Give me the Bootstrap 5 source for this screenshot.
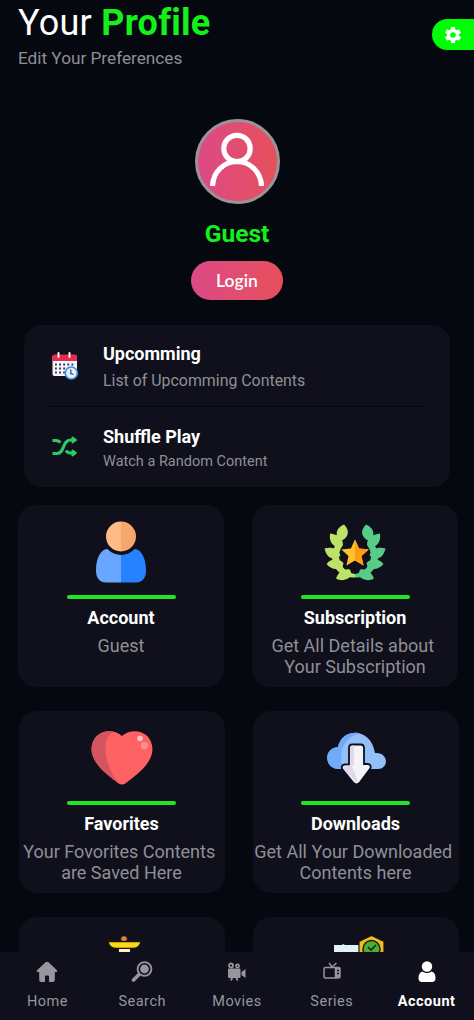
<!DOCTYPE html>
<html lang="en">
<head>
<meta charset="utf-8">
<meta name="viewport" content="width=device-width, initial-scale=1">
<title>Your Profile</title>
<link href="https://cdn.jsdelivr.net/npm/bootstrap@5.3.0/dist/css/bootstrap.min.css" rel="stylesheet">
<style>
body{background:#06080f;color:#fff;font-family:Roboto,"Liberation Sans",sans-serif}
main{min-height:0}
.page-head{height:85px;padding:3px 0 0 18px}
.page-title{font-size:36px;line-height:40px;font-weight:400;letter-spacing:.25px}
.green{color:#15f01c}
.dim{color:#8f8f96}
.page-sub{font-size:17.2px;line-height:22px;margin-top:4px}
.gear-btn{width:42px;height:31px;margin-top:16px;background:#00ff06;border-radius:16px 0 0 16px;padding-left:13px}
.avatar{width:85px;height:85px;margin-top:34px;border:3px solid #9a9499;background:linear-gradient(90deg,#dd4a85,#e6505c)}
.user-name{font-size:24.5px;line-height:30px;margin-top:15px}
.login-btn{width:92px;height:39px;margin-top:12px;background:linear-gradient(90deg,#dd4a85,#e6505c);color:#fff;font:600 17.5px/36px Lato,"Open Sans",sans-serif}
.panel{background:#0f101b;border-radius:18px}
.quick{margin:25px 24px 0;height:162px}
.quick-row{height:81px;padding:4px 24px 0}
.quick-icon{width:34px;margin-right:21px;padding-bottom:3px}
.rule{height:1px;margin:0 24px;background:#06070d}
.q-title{font-size:18px;line-height:22px}
.q-text{font-size:15.9px;line-height:22px;margin-top:5px}
.q-small{font-size:14.5px;margin-top:3px}
.tiles{display:grid;grid-template-columns:206px 206px;column-gap:28px;row-gap:24px;margin:18px 0 0 18px}
.tile{height:182px;padding-top:16px}
.tile svg{display:block}
.shift{margin-left:1px;margin-right:-1px;padding-right:1px}
.tile-bar{width:109px;height:4px;border-radius:2px;background:#21e524;margin-top:12px}
.t-title{font-size:18px;line-height:22px;margin-top:8px}
.t-text{font-size:18px;line-height:21px;margin-top:6px;white-space:nowrap}
.tabs{height:68px;background:#0f101b}
.tab-link{width:20%;padding-top:7px;color:#96969c;font-size:14.5px;letter-spacing:.5px;text-decoration:none}
.tab-link span{line-height:20px;margin-top:7px}
.tab-link.active{color:#fff;font-weight:700}
</style>
</head>
<body class="d-flex flex-column vh-100 overflow-hidden">
<header class="page-head d-flex justify-content-between flex-shrink-0">
  <div>
    <h1 class="page-title mb-0">Your <b class="green">Profile</b></h1>
    <p class="page-sub dim mb-0">Edit Your Preferences</p>
  </div>
  <a class="gear-btn d-flex align-items-center" href="#" aria-label="Settings">
    <svg width="16" height="16" viewBox="2 2 20 20" fill="#fff"><path fill-rule="evenodd" d="M19.4 13a7.500 7.500 0 0 0 0-2l2.100-1.650a.5.5 0 0 0 .12-.64l-2-3.460a.5.5 0 0 0-.61-.22l-2.490 1a7.300 7.300 0 0 0-1.690-.98l-.38-2.650A.5.5 0 0 0 14 2h-4a.5.5 0 0 0-.49.42l-.38 2.650c-.61.25-1.170.59-1.690.98l-2.490-1a.5.5 0 0 0-.61.22l-2 3.460a.5.5 0 0 0 .12.640L4.600 11a7.900 7.900 0 0 0 0 2l-2.110 1.650a.5.5 0 0 0-.12.640l2 3.460c.12.220.390.300.610.220l2.490-1c.52.400 1.080.730 1.690.980l.38 2.650c.3.240.240.420.490.420h4c.25 0 .460-.18.490-.42l.38-2.650c.61-.25 1.170-.59 1.690-.98l2.490 1c.23.090.490 0 .610-.22l2-3.460a.5.5 0 0 0-.12-.64zM12 15.500a3.500 3.500 0 1 1 0-7 3.500 3.500 0 0 1 0 7z"/></svg>
  </a>
</header>

<main class="flex-fill overflow-hidden">
  <section class="d-flex flex-column align-items-center">
    <div class="avatar rounded-circle d-flex justify-content-center align-items-center">
      <svg class="flex-shrink-0" width="80" height="80" viewBox="0 0 80 80" fill="none" stroke="#fff" stroke-width="5.200"><circle cx="40" cy="26.500" r="13.200"/><path d="M15.500 64C16 50 27 39.500 40 39.500S64 50 64.500 64"/></svg>
    </div>
    <h2 class="user-name green fw-bold mb-0">Guest</h2>
    <button class="login-btn btn rounded-pill border-0 p-0">Login</button>
  </section>

  <section class="panel quick">
    <div class="quick-row d-flex align-items-center">
      <div class="quick-icon d-flex justify-content-center">
        <svg width="28" height="28" viewBox="0 0 28 28"><rect x="1.500" y="3" width="24.500" height="21" rx="2" fill="#f4f4fa"/><path d="M1.500 9V4.500Q1.500 2.500 3.500 2.500H24Q26 2.500 26 4.500V9z" fill="#e52b4f"/><path d="M7.500 1v4M18.500 1v4" stroke="#fff" stroke-width="2" stroke-linecap="round"/><path d="M4 12.500h20M4 16.500h20M4 20.500h12" stroke="#343850" stroke-width="1.800" stroke-dasharray="1.900 2.200"/><circle cx="20.300" cy="21" r="6" fill="#dff1fc" stroke="#4692e4" stroke-width="1.700"/><path d="M19.800 17.500v4l2.700 1" fill="none" stroke="#3a4560" stroke-width="1.200"/></svg>
      </div>
      <div><div class="q-title fw-bold">Upcomming</div><div class="q-text dim">List of Upcomming Contents</div></div>
    </div>
    <div class="rule"></div>
    <div class="quick-row d-flex align-items-center">
      <div class="quick-icon d-flex justify-content-center">
        <svg width="28" height="24" viewBox="0 0 28 24" fill="none" stroke="#2bca66" stroke-width="3.100" stroke-linejoin="round"><path d="M1.500 4.500H5Q7.500 4.500 9.500 6.500M1.500 17.500H6C14 17.500 11 4 19.500 4H22M15 14.500Q16.500 17 19.500 17H22"/><path d="M21.500 1.500 25 4l-3.500 2.500zM21.500 14.500 25 17l-3.500 2.500z" fill="#2bca66" stroke-width="2"/></svg>
      </div>
      <div><div class="q-title fw-bold">Shuffle Play</div><div class="q-text q-small dim">Watch a Random Content</div></div>
    </div>
  </section>

  <section class="tiles text-center">
    <article class="panel tile d-flex flex-column align-items-center">
      <svg width="62" height="62" viewBox="0 0 62 62"><path d="M31 30.500c-5 0-6-1.500-8-2.500C12 25.500 6 35 6 50c0 7 4 11.500 10 11.500h15z" fill="#69a6ff"/><path d="M31 30.500c5 0 6-1.500 8-2.500 11-2.500 17 7 17 22 0 7-4 11.500-10 11.500H31z" fill="#2682ff"/><circle cx="31" cy="15.500" r="18.500" fill="#0f101b"/><path d="M31 .5a15 15 0 0 0 0 30z" fill="#ffbb85"/><path d="M31 .5a15 15 0 0 1 0 30z" fill="#f6a86c"/></svg>
      <div class="tile-bar"></div><div class="t-title fw-bold">Account</div><div class="t-text dim">Guest</div>
    </article>
    <article class="panel tile d-flex flex-column align-items-center">
      <svg width="62" height="62" viewBox="0 0 62 62"><defs><g id="branch"><path d="M31 56.500A21 21 0 0 1 14 21l5 3a18 18 0 0 0 12 29z"/><path d="M20 3.500c-7 3-9 8-6 15l4 1c7-4 8-10 2-16zM6 12.500c-1 8 2 12 9 15l4-4c0-6-5-10-13-11zM.5 27.500c2 8 6 11 12 10l4-3c-2-7-9-9-16-7zM2.500 43c5 6 11 6 16 3l1-4c-5-5-12-5-17 1zM12 57.500c6 3.500 12 1 16-3l-2-6c-7-1-11 2-14 9z"/></g></defs><use href="#branch" fill="#bce268"/><use href="#branch" fill="#57cc86" transform="matrix(-1 0 0 1 62 0)"/><path d="m31 18.500 4.100 9 9.600 1-7.200 6.500 2.100 9.500-8.600-4.900-8.600 4.900 2.100-9.500-7.200-6.500 9.600-1z" fill="#ffc12e"/><path d="m31 18.500 4.100 9 9.600 1-7.200 6.500 2.100 9.500-8.600-4.900z" fill="#ff9d12"/></svg>
      <div class="tile-bar"></div><div class="t-title fw-bold">Subscription</div><div class="t-text dim">Get All Details about&nbsp;<br>Your Subscription</div>
    </article>
    <article class="panel tile shift d-flex flex-column align-items-center">
      <svg width="62" height="62" viewBox="0 0 62 62"><path d="M31 9C22 0 1 3 .5 22 .5 37 18 49 27 56q4 3 8 0C44 49 61.500 37 61.500 22 61 3 40 0 31 9z" fill="#ff6265"/><path d="M23 4.700C11 2 1 9 .5 22 .5 37 18 49 28 56.500 20 46 14.500 34 14.500 22 14.500 13 17 7.500 23 4.700z" fill="#d45560"/><circle cx="49" cy="11.500" r="2.800" fill="#ffc5c4"/><circle cx="53.500" cy="18.500" r="3.700" fill="#ff8d8d"/></svg>
      <div class="tile-bar"></div><div class="t-title fw-bold">Favorites</div><div class="t-text dim">Your Fovorites Contents&nbsp;<br>are Saved Here</div>
    </article>
    <article class="panel tile shift d-flex flex-column align-items-center">
      <svg width="62" height="62" viewBox="0 0 62 62"><path d="M14 42C-1 42-2 21 13 20 17 0 46 0 50 26c14-1 14 16 3 16z" fill="#94c0fa"/><path d="M14 42C-1 42-2 21 13 20 16 8 25 5 34 6 18 12 13 25 18 42z" fill="#70aafa"/><path d="M24 21q0-3.500 3.500-3.500h8q3.500 0 3.500 3.500v16h3.500c3.500 0 4 3.500 2 5.500L34.500 56q-3 2.700-6 0L18 43c-2-2-1.500-5.500 2-5.500h4z" fill="#f5f2fa" stroke="#07101f" stroke-width="1.800"/><path d="M25 21q0-2.500 2.500-2.500H29v19q0 1-2 1.500l6 16-3-1L19 42.500q-1.500-4 2-4h4z" fill="#dfd9e8"/></svg>
      <div class="tile-bar"></div><div class="t-title fw-bold">Downloads</div><div class="t-text dim">Get All Your Downloaded&nbsp;<br>Contents here</div>
    </article>
    <article class="panel tile shift d-flex flex-column align-items-center">
      <svg width="62" height="62" viewBox="0 0 62 62"><circle cx="33" cy="6" r="3.300" fill="#d98b3c" stroke="#241409"/><path d="M17 8.500h33q-1 7-9 7H26q-8 0-9-7z" fill="#f8d91c" stroke="#1d1506" stroke-width="1.400"/><path d="M28 16h11v20H28z" fill="#fff0c8"/></svg>
    </article>
    <article class="panel tile shift d-flex flex-column align-items-center">
      <svg width="62" height="62" viewBox="0 0 62 62"><path d="M9 12h8l1-1 2 1h14v10H9z" fill="#dff2f8"/><path d="m46.500 2.500 12.500 6v18l-12.500 6-12.500-6v-18z" fill="#f4bb20" stroke="#1b1608" stroke-width="1.200"/><circle cx="46.500" cy="16" r="8.500" fill="#4fae36" stroke="#142511" stroke-width="1.500"/><path d="m43 14 3 3 5-5" fill="none" stroke="#112a12" stroke-width="1.600"/></svg>
    </article>
  </section>
</main>

<nav class="tabs d-flex flex-shrink-0">
  <a class="tab-link d-flex flex-column align-items-center" href="#"><svg width="24" height="26" viewBox="0 0 24 26" fill="currentColor"><path d="M10.500 3.300q1.500-1.300 3 0l8.500 8q1 1.500-.5 1.700h-1.700v8q0 2-2 2H14v-5.500q0-1-1-1h-2q-1 0-1 1V23H6.200q-2 0-2-2v-8H2.500Q1 12.800 2 11.300z"/></svg><span>Home</span></a>
  <a class="tab-link d-flex flex-column align-items-center" href="#"><svg width="24" height="26" viewBox="0 0 24 26"><circle cx="14.500" cy="10" r="6.900" fill="none" stroke="currentColor" stroke-width="1.900"/><circle cx="14.500" cy="10" r="4.400" fill="currentColor"/><path d="m8.500 16-5 5" stroke="currentColor" stroke-width="3.600" stroke-linecap="round"/></svg><span>Search</span></a>
  <a class="tab-link d-flex flex-column align-items-center" href="#"><svg width="24" height="26" viewBox="0 0 24 26" fill="currentColor"><circle cx="6" cy="6.500" r="2" fill="none" stroke="currentColor" stroke-width="1.800"/><circle cx="12.500" cy="7" r="1.600" fill="none" stroke="currentColor" stroke-width="1.600"/><path d="M4 9.500h10.500q1 0 1 1v7.500q0 1-1 1h-2l1 2.500h-2L10.500 19H8l-1 2.500H5L6 19H4q-1 0-1-1v-7.500q0-1 1-1zM16.500 13l4-3v9l-4-3z"/></svg><span>Movies</span></a>
  <a class="tab-link d-flex flex-column align-items-center" href="#"><svg width="24" height="26" viewBox="0 0 24 26" fill="none" stroke="currentColor" stroke-width="1.500"><rect x="4" y="8.500" width="16" height="10.500" rx="1.500"/><path d="M15.500 8.500V19M9 4l3 4 4.500-4"/><path d="M16 9h4v9.500h-4z" fill="currentColor" stroke="none"/><path d="M17 11.500h2M17 14.500h2" stroke="#0f101b"/></svg><span>Series</span></a>
  <a class="tab-link active d-flex flex-column align-items-center" href="#"><svg width="24" height="26" viewBox="0 0 24 26" fill="currentColor"><path d="M7.500 12.500Q12 15.500 16.500 12.500 20.500 13.500 20.500 19 20.500 23 17 23H7Q3.500 23 3.500 19 3.500 13.500 7.500 12.500z"/><circle cx="12" cy="7.500" r="5.200"/></svg><span>Account</span></a>
</nav>
<script src="https://cdn.jsdelivr.net/npm/bootstrap@5.3.0/dist/js/bootstrap.bundle.min.js"></script>
</body>
</html>
